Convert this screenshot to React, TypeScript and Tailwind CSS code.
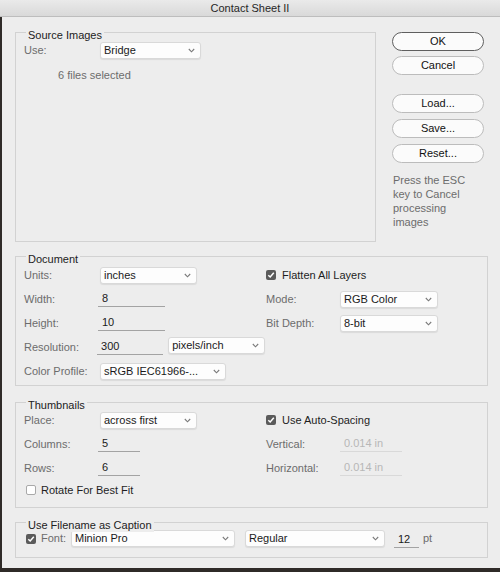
import React from "react";

const Chevron = () => (
  <svg width="7" height="5" viewBox="0 0 7 5" className="shrink-0">
    <path d="M0.8 1 L3.5 3.8 L6.2 1" fill="none" stroke="#7a7a7a" strokeWidth="1.1" />
  </svg>
);

function Select({ value, className }: { value: string; className: string }) {
  return (
    <div
      className={`flex items-center justify-between h-[17px] bg-[#fdfdfd] rounded-[3px] border border-[#d9d9d9] shadow-[0_1px_1px_rgba(0,0,0,0.08)] pl-[3px] pr-[5px] text-[#1a1a1a] ${className}`}
    >
      <span className="leading-[15px] whitespace-nowrap">{value}</span>
      <Chevron />
    </div>
  );
}

function Field({ value, className, disabled }: { value: string; className: string; disabled?: boolean }) {
  return (
    <div
      className={`h-[16px] flex items-center pl-[4px] border-b ${
        disabled ? "border-[#d9d9d9] text-[#b7b7b7]" : "border-[#a3a3a3] text-[#1a1a1a]"
      } ${className}`}
    >
      <span className="leading-[13px]">{value}</span>
    </div>
  );
}

function Check({ checked }: { checked: boolean }) {
  return checked ? (
    <div className="w-[10px] h-[10px] rounded-[2px] bg-[#5b5b5b] flex items-center justify-center shrink-0">
      <svg width="8" height="8" viewBox="0 0 8 8">
        <path d="M1.3 4.2 L3.2 6 L6.8 1.8" fill="none" stroke="#ffffff" strokeWidth="1.5" />
      </svg>
    </div>
  ) : (
    <div className="w-[10px] h-[10px] rounded-[2px] bg-white border border-[#a9a9a9] shrink-0" />
  );
}

function Group({ title, className, children }: { title: string; className: string; children?: React.ReactNode }) {
  return (
    <div className={`relative border border-[#d2d2d2] ${className}`}>
      <span className="absolute left-[10px] top-[-4px] px-[2px] bg-[#ededed] leading-[13px] text-[#222222]">
        {title}
      </span>
      {children}
    </div>
  );
}

const Label = ({ children, className }: { children: React.ReactNode; className: string }) => (
  <span className={`text-[#6c6c6c] leading-[13px] whitespace-nowrap ${className}`}>{children}</span>
);

function Button({ label, primary, className }: { label: string; primary?: boolean; className?: string }) {
  return (
    <div
      className={`h-[19px] rounded-full bg-[#fbfbfb] border flex items-center justify-center text-[#111111] leading-[13px] ${
        primary ? "border-[#5f5f5f]" : "border-[#bcbcbc]"
      } ${className ?? ""}`}
    >
      {label}
    </div>
  );
}

export default function App() {
  return (
    <div className="w-[500px] h-[572px] bg-[#2f2b28] overflow-hidden font-['Liberation_Sans',Arial,sans-serif] text-[11px]">
      <div className="h-[17px] bg-linear-to-b from-[#eaeaea] to-[#d9d9d9] border-b border-[#bdbdbd] flex items-center justify-center">
        <span className="text-[#262626] leading-[13px]">Contact Sheet II</span>
      </div>
      <div className="ml-[2px] h-[551px] bg-[#ededed] pl-[13px] pr-[12px] flex flex-col">
        {/* Top row */}
        <div className="mt-[15px] flex">
          <Group title="Source Images" className="w-[361px] h-[210px]">
            <div className="mt-[9px] flex items-center h-[17px]">
              <Label className="pl-[8px] w-[84px]">Use:</Label>
              <Select value="Bridge" className="w-[101px]" />
            </div>
            <div className="mt-[10px] pl-[42px] h-[13px] leading-[13px] text-[#6c6c6c]">6 files selected</div>
          </Group>
          <div className="ml-[16px] w-[92px] flex flex-col">
            <Button label="OK" primary />
            <Button label="Cancel" className="mt-[5px]" />
            <Button label="Load..." className="mt-[19px]" />
            <Button label="Save..." className="mt-[6px]" />
            <Button label="Reset..." className="mt-[6px]" />
            <div className="mt-[10px] pl-[1px] leading-[14px] text-[#6c6c6c]">
              Press the ESC
              <br />
              key to Cancel
              <br />
              processing
              <br />
              images
            </div>
          </div>
        </div>

        {/* Document */}
        <Group title="Document" className="mt-[14px] h-[130px]">
          <div className="pt-[6px] flex">
            <div className="w-[249px] flex flex-col">
              <div className="h-[24px] flex items-center">
                <Label className="pl-[8px] w-[84px]">Units:</Label>
                <Select value="inches" className="w-[97px]" />
              </div>
              <div className="h-[24px] flex items-center">
                <Label className="pl-[8px] w-[82px]">Width:</Label>
                <Field value="8" className="w-[67px]" />
              </div>
              <div className="h-[24px] flex items-center">
                <Label className="pl-[8px] w-[82px]">Height:</Label>
                <Field value="10" className="w-[67px]" />
              </div>
              <div className="h-[24px] flex items-center">
                <Label className="pl-[8px] w-[82px]">Resolution:</Label>
                <Field value="300" className="w-[67px]" />
                <Select value="pixels/inch" className="ml-[5px] w-[98px] h-[16px] mb-[4px]" />
              </div>
              <div className="h-[24px] flex items-center">
                <Label className="pl-[8px] w-[84px]">Color Profile:</Label>
                <Select value="sRGB IEC61966-..." className="w-[126px]" />
              </div>
            </div>
            <div className="flex flex-col">
              <div className="h-[24px] flex items-center pl-[1px]">
                <Check checked />
                <span className="ml-[6px] leading-[13px] text-[#1e1e1e]">Flatten All Layers</span>
              </div>
              <div className="h-[24px] flex items-center">
                <Label className="pl-[1px] w-[75px]">Mode:</Label>
                <Select value="RGB Color" className="w-[98px]" />
              </div>
              <div className="h-[24px] flex items-center">
                <Label className="pl-[1px] w-[75px]">Bit Depth:</Label>
                <Select value="8-bit" className="w-[98px]" />
              </div>
            </div>
          </div>
        </Group>

        {/* Thumbnails */}
        <Group title="Thumbnails" className="mt-[16px] h-[106px]">
          <div className="pt-[5px] flex">
            <div className="w-[249px] flex flex-col">
              <div className="h-[24px] flex items-center">
                <Label className="pl-[8px] w-[84px]">Place:</Label>
                <Select value="across first" className="w-[97px]" />
              </div>
              <div className="h-[24px] flex items-center">
                <Label className="pl-[8px] w-[82px]">Columns:</Label>
                <Field value="5" className="w-[42px]" />
              </div>
              <div className="h-[24px] flex items-center">
                <Label className="pl-[8px] w-[82px]">Rows:</Label>
                <Field value="6" className="w-[42px]" />
              </div>
              <div className="h-[20px] flex items-center pl-[10px]">
                <Check checked={false} />
                <span className="ml-[5px] leading-[13px] text-[#1e1e1e]">Rotate For Best Fit</span>
              </div>
            </div>
            <div className="flex flex-col">
              <div className="h-[24px] flex items-center pl-[1px]">
                <Check checked />
                <span className="ml-[6px] leading-[13px] text-[#1e1e1e]">Use Auto-Spacing</span>
              </div>
              <div className="h-[24px] flex items-center">
                <Label className="pl-[1px] w-[75px]">Vertical:</Label>
                <Field value="0.014 in" className="w-[62px]" disabled />
              </div>
              <div className="h-[24px] flex items-center">
                <Label className="pl-[1px] w-[75px]">Horizontal:</Label>
                <Field value="0.014 in" className="w-[62px]" disabled />
              </div>
            </div>
          </div>
        </Group>

        {/* Caption */}
        <Group title="Use Filename as Caption" className="mt-[14px] h-[36px]">
          <div className="pt-[7px] h-[24px] flex items-center pl-[10px]">
            <Check checked />
            <Label className="ml-[5px] w-[30px]">Font:</Label>
            <Select value="Minion Pro" className="w-[164px]" />
            <Select value="Regular" className="ml-[10px] w-[140px]" />
            <Field value="12" className="ml-[9px] w-[25px] mt-[2px]" />
            <Label className="ml-[4px]">pt</Label>
          </div>
        </Group>
      </div>
    </div>
  );
}
